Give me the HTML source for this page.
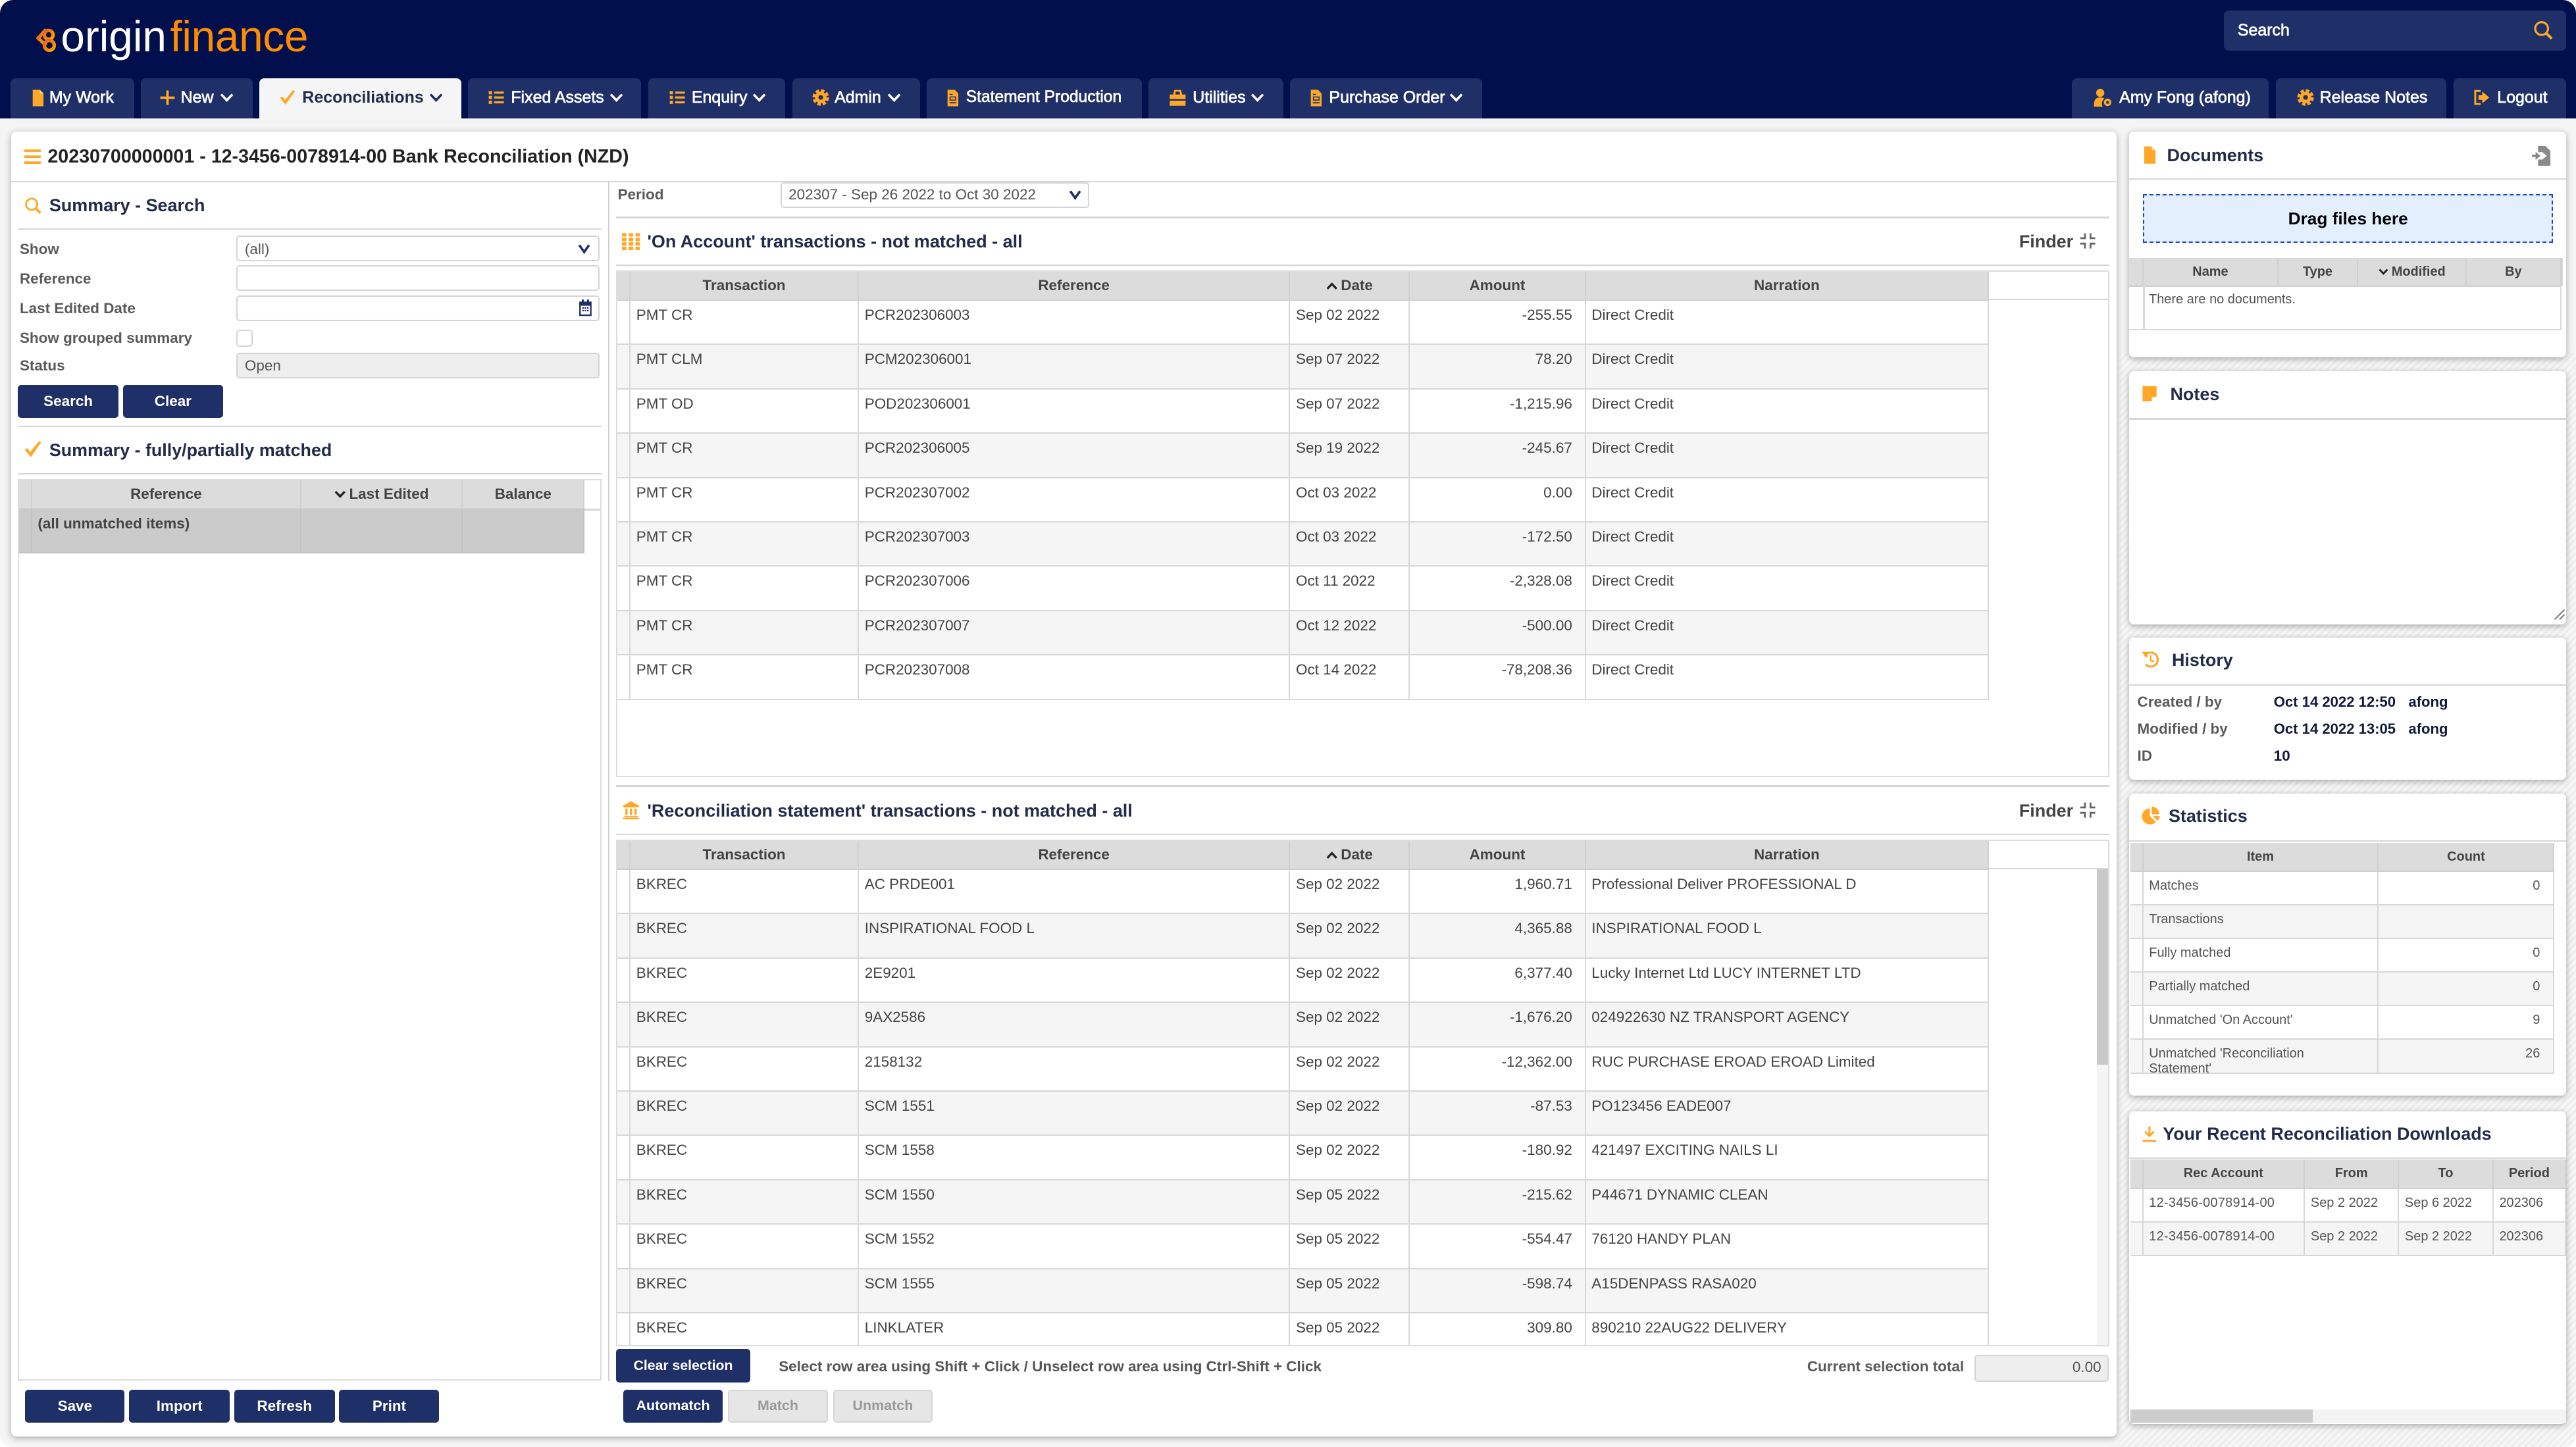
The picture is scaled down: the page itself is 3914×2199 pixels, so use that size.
<!DOCTYPE html>
<html lang="en"><head><meta charset="utf-8"><title>Bank Reconciliation</title>
<style>
html,body{margin:0;padding:0;background:#fff;width:3914px;height:2199px;overflow:hidden}
#root{zoom:2.4962;position:relative;width:1568px;height:881px;background:#f5f5f5;border-radius:8px;overflow:hidden;font-family:"Liberation Sans",Arial,sans-serif;font-size:9px;color:#444}
#root div,#root svg,#root table{position:absolute}
.x{white-space:nowrap;line-height:13px}
.hd{left:0;top:0;width:1568px;height:72px;background:#010f4d}
.tab{top:47.5px;height:24.5px;background:#1f2f68;border-radius:3px 3px 0 0}
.tt{top:53px;font-size:10px;color:#fff;white-space:nowrap;line-height:13px;-webkit-text-stroke:.28px #fff}
.p{background:#fff;border-radius:3px;box-shadow:0 1px 4px rgba(0,0,0,.32)}
.ln{height:1px;background:#d6d6d6}
.st{font-size:10.8px;font-weight:bold;color:#222c4a;white-space:nowrap;line-height:13px}
.lb{font-weight:bold;color:#5a5a5a;white-space:nowrap;line-height:13px}
.in{box-sizing:border-box;background:#fff;border:1px solid #d4d4d4;border-radius:2px}
.b{box-sizing:border-box;background:#1f2f68;color:#fff;font-weight:bold;text-align:center;border-radius:2px;height:20px;line-height:20px;white-space:nowrap}
.dis{background:#e6e6e6;color:#999;border:1px solid #d6d6d6;line-height:18px}
.box{box-sizing:border-box;border:1px solid #dcdcdc;background:#fff;overflow:hidden}
table{border-collapse:separate;border-spacing:0;table-layout:fixed}
th{box-sizing:border-box;background:#dcdcdc;border-right:1px solid #d0d0d0;border-bottom:1px solid #cfcfcf;font-weight:bold;color:#444;text-align:center;padding:0;white-space:nowrap;overflow:hidden}
td{box-sizing:border-box;border-right:1px solid #d8d8d8;border-bottom:1px solid #d8d8d8;vertical-align:top;padding:0 3.5px;white-space:nowrap;overflow:hidden;color:#444}
.m th{height:17.5px;line-height:17px;font-size:9px}
.m td{height:27px;line-height:18px;font-size:9px}
.m tr:nth-child(odd) td{background:#f5f5f5}
td.n{text-align:right;padding-right:7.5px}
td.z{padding:0}
.s{font-size:8px}
.s th{font-size:8px;height:17px;line-height:17px}
.s td{font-size:8px;height:20.45px;line-height:17px;color:#555}
.s tr:nth-child(odd) td{background:#f5f5f5}
.s td.c{padding-right:8px;text-align:right}
.hat{left:1290px;top:215px;width:278px;height:666px;background:repeating-linear-gradient(135deg,#ececec 0 1px,#f6f6f6 1px 3px)}
.v{display:inline-block;vertical-align:middle;margin-right:2px}
</style></head><body>
<svg width="0" height="0" style="position:absolute"><defs>
<symbol id="doc" viewBox="0 0 16 16"><path fill="#ffa726" d="M3 0h7l3.5 3.5V16H3z"/><path fill="#ffd9a0" d="M10 0l3.5 3.5H10z"/></symbol>
<symbol id="plus" viewBox="0 0 16 16"><path fill="#ffa726" d="M6.8 1h2.4v5.8H15v2.4H9.2V15H6.8V9.200H1V6.800h5.800z"/></symbol>
<symbol id="chk" viewBox="0 0 16 16"><path fill="#ffa726" d="M1 8.500l2-1.500 2.800 3.400L13.500 1 15.500 2 6.200 15z"/></symbol>
<symbol id="lst" viewBox="0 0 16 16"><path fill="#ffa726" d="M1 2h3v3H1zM6 2.500h9v2H6zM1 6.500h3v3H1zM6 7h9v2H6zM1 11h3v3H1zM6 11.500h9v2H6z"/></symbol>
<symbol id="gear" viewBox="0 0 16 16"><circle cx="8" cy="8" r="6.200" fill="none" stroke="#ffa726" stroke-width="3" stroke-dasharray="3.100 1.770"/><circle cx="8" cy="8" r="5.400" fill="#ffa726"/><circle cx="8" cy="8" r="2.200" fill="#1f2f68"/></symbol>
<symbol id="stm" viewBox="0 0 16 16"><path fill="#ffa726" d="M3 0h7l3.500 3.500V16H3z"/><path fill="#1f2f68" d="M5 4h3v1H5zM5 6.500h6.500v4H5zM5 12h6.500v1.200H5z"/><path fill="#ffa726" d="M6 7.500h4.500v2H6z"/></symbol>
<symbol id="tool" viewBox="0 0 16 16"><path fill="#ffa726" d="M5 1h6l1 4h3v4H1V5h3zM6.300 2.500L6 5h4l-.3-2.500zM1 10.500h14V15H1z"/></symbol>
<symbol id="usr" viewBox="0 0 16 16"><circle cx="6" cy="3.800" r="3.300" fill="#ffa726"/><path fill="#ffa726" d="M1 15c-.5-6 2-7.500 5-7.500 1.500 0 2.600.3 3.400 1A5 5 0 0 0 8 15z"/><circle cx="12" cy="11.500" r="3" fill="#ffa726"/><circle cx="12" cy="11.500" r="1.200" fill="#1f2f68"/></symbol>
<symbol id="out" viewBox="0 0 16 16"><path fill="none" stroke="#ffa726" stroke-width="1.800" d="M7 2H2v12h5"/><path fill="#ffa726" d="M8.500 2.500L15 8l-6.500 5.500V10.200H5V5.800h3.500z"/></symbol>
<symbol id="srch" viewBox="0 0 16 16"><circle cx="6.800" cy="6.800" r="5.200" fill="none" stroke="#ffa726" stroke-width="1.700"/><path stroke="#ffa726" stroke-width="2.200" d="M10.500 10.500L15 15"/></symbol>
<symbol id="ham" viewBox="0 0 16 16"><path fill="#ffa726" d="M0 1h16v2.400H0zM0 6.800h16v2.400H0zM0 12.600h16V15H0z"/></symbol>
<symbol id="grd" viewBox="0 0 16 16"><path fill="#ffa726" d="M0 1h4v3H0zM6 1h4v3H6zM12 1h4v3h-4zM0 5h4v3H0zM6 5h4v3H6zM12 5h4v3h-4zM0 9h4v3H0zM6 9h4v3H6zM12 9h4v3h-4zM0 13h4v3H0zM6 13h4v3H6zM12 13h4v3h-4z"/></symbol>
<symbol id="bnk" viewBox="0 0 16 16"><path fill="#ffa726" d="M8 0l7 4v1.500H1V4zM2 13h12v1H2zM1 14.500h14V16H1zM3 6.500h2V12H3zM7 6.500h2V12H7zM11 6.500h2V12h-2z"/></symbol>
<symbol id="fnd" viewBox="0 0 16 16"><path fill="none" stroke="#666" stroke-width="1.700" d="M5.400 1v4.500H1M10.600 15v-4.500H15M1 10.500h4.400V15M15 5.500h-4.400V1"/></symbol>
<symbol id="cal" viewBox="0 0 16 16"><path fill="#1f2f68" d="M2 2h2.500V0h2v2h3V0h2v2H14v14H2zM3.500 6v8.500h9V6z"/><path fill="#1f2f68" d="M5 7.500h1.500V9H5zM7.300 7.500h1.500V9H7.300zM9.600 7.500h1.500V9H9.600zM5 10h1.500v1.500H5zM7.300 10h1.500v1.500H7.300zM9.600 10h1.500v1.500H9.600z"/></symbol>
<symbol id="hst" viewBox="0 0 16 16"><path fill="none" stroke="#ffa726" stroke-width="1.800" d="M2.600 5.500A6.200 6.200 0 1 1 3.500 12.500"/><path fill="#ffa726" d="M0 1.500h5.500L5 7z"/><path fill="none" stroke="#ffa726" stroke-width="1.500" d="M8 4.500V9l3 1.200"/></symbol>
<symbol id="pie" viewBox="0 0 16 16"><path fill="#ffa726" d="M7 2.500V9l5 5A6.800 6.800 0 1 1 7 2.500z"/><path fill="#ffa726" d="M8.500 1A6.500 6.500 0 0 1 15 7.500H8.500zM9.500 9H15.500a7 7 0 0 1-2 4z"/></symbol>
<symbol id="dwn" viewBox="0 0 16 16"><path fill="#ffa726" d="M7 0h2v7.500l3-2.800 1.300 1.300L8 11.500 2.700 6 4 4.700l3 2.800zM1 14h14v2H1z"/></symbol>
<symbol id="nte" viewBox="0 0 16 16"><path fill="#ffa726" d="M1.500 1h13v9.500L9.500 15h-8z"/><path fill="#fff" d="M14.500 11v.6L10.200 15H10v-2.500c0-1 .5-1.500 1.500-1.500z"/></symbol>
<symbol id="imp" viewBox="0 0 16 16"><path fill="#8a8a8a" d="M5 0h6l4 4v12H5v-5h3.500L12 8 8.500 5H5z"/><path fill="#8a8a8a" d="M0 7h3V4.800L7 8l-4 3.200V9H0z"/></symbol>
<symbol id="w" viewBox="0 0 10 8"><path fill="none" stroke="#fff" stroke-width="1.700" d="M1 1.500l4 4.200 4-4.200"/></symbol>
<symbol id="k" viewBox="0 0 10 8"><path fill="none" stroke="#1f2f68" stroke-width="1.700" d="M1 1.500l4 4.200 4-4.200"/></symbol>
<symbol id="kd" viewBox="0 0 10 8"><path fill="none" stroke="#222" stroke-width="1.900" d="M1 1.500l4 4.200 4-4.200"/></symbol>
<symbol id="ku" viewBox="0 0 10 8"><path fill="none" stroke="#222" stroke-width="1.900" d="M1 6.500l4-4.200 4 4.200"/></symbol>
<symbol id="nvy" viewBox="0 0 10 8"><path fill="none" stroke="#1f2f68" stroke-width="1.700" d="M1.500 1.500l3.500 5 3.500-5"/></symbol>
<linearGradient id="lg" x1="0" y1="0" x2="1" y2="1"><stop offset="0" stop-color="#e8601a"/><stop offset="1" stop-color="#ffa400"/></linearGradient>
</defs></svg>
<div id="root">

<div class="hd"></div>
<svg style="left:22px;top:16.500px;width:12px;height:15.500px" viewBox="0 0 12 15.500"><g fill="none" stroke="url(#lg)" stroke-width="2.100"><path d="M6 1.500L1.200 6.800 6 11.200"/><circle cx="7.600" cy="4.800" r="2.700"/><circle cx="8" cy="11.200" r="3"/></g></svg>
<div class="x" style="left:37px;top:6px;font-size:26.300px;line-height:33px;color:#fff">origin</div>
<div class="x" style="left:103.500px;top:6px;font-size:26.300px;line-height:33px;color:#ff8c00;letter-spacing:-.1px">finance</div>

<div style="left:1353.500px;top:6.500px;width:208.500px;height:24.500px;background:#1f2f68;border-radius:3px"></div>
<div class="tt" style="left:1362px;top:12px">Search</div>
<svg style="left:1542px;top:12px;width:12px;height:12.500px"><use href="#srch"/></svg>

<div class="tab" style="left:6.600px;width:75px"></div>
<svg style="left:18px;top:53.500px;width:10px;height:12px"><use href="#doc"/></svg>
<div class="tt" style="left:30px">My Work</div>
<div class="tab" style="left:85.700px;width:68px"></div>
<svg style="left:97px;top:54.500px;width:10px;height:10px"><use href="#plus"/></svg>
<div class="tt" style="left:110px">New</div>
<svg style="left:134px;top:56px;width:8.500px;height:7px"><use href="#w"/></svg>
<div class="tab" style="left:158px;width:122.700px;background:#f5f5f5"></div>
<svg style="left:170px;top:54px;width:10px;height:10.500px"><use href="#chk"/></svg>
<div class="tt" style="left:184px;color:#222c4a;font-weight:bold;-webkit-text-stroke:0">Reconciliations</div>
<svg style="left:261px;top:56px;width:8.500px;height:7px"><use href="#k"/></svg>
<div class="tab" style="left:285px;width:105px"></div>
<svg style="left:297px;top:54px;width:10.500px;height:10.500px"><use href="#lst"/></svg>
<div class="tt" style="left:311px">Fixed Assets</div>
<svg style="left:371px;top:56px;width:8.500px;height:7px"><use href="#w"/></svg>
<div class="tab" style="left:394.700px;width:83.300px"></div>
<svg style="left:407px;top:54px;width:10.500px;height:10.500px"><use href="#lst"/></svg>
<div class="tt" style="left:421px">Enquiry</div>
<svg style="left:458px;top:56px;width:8.500px;height:7px"><use href="#w"/></svg>
<div class="tab" style="left:482.300px;width:77.700px"></div>
<svg style="left:494.500px;top:54px;width:10.500px;height:10.500px"><use href="#gear"/></svg>
<div class="tt" style="left:508px">Admin</div>
<svg style="left:540px;top:56px;width:8.500px;height:7px"><use href="#w"/></svg>
<div class="tab" style="left:564px;width:131px"></div>
<svg style="left:575px;top:53.500px;width:10px;height:12px"><use href="#stm"/></svg>
<div class="tt" style="left:588px;font-size:9.850px">Statement Production</div>
<div class="tab" style="left:699px;width:82px"></div>
<svg style="left:711px;top:54px;width:11.500px;height:11px"><use href="#tool"/></svg>
<div class="tt" style="left:726px">Utilities</div>
<svg style="left:761px;top:56px;width:8.500px;height:7px"><use href="#w"/></svg>
<div class="tab" style="left:785px;width:117px"></div>
<svg style="left:796px;top:53.500px;width:10px;height:12px"><use href="#stm"/></svg>
<div class="tt" style="left:809px">Purchase Order</div>
<svg style="left:882px;top:56px;width:8.500px;height:7px"><use href="#w"/></svg>

<div class="tab" style="left:1261px;width:120px"></div>
<svg style="left:1273px;top:53.500px;width:13.500px;height:12px"><use href="#usr"/></svg>
<div class="tt" style="left:1290px">Amy Fong (afong)</div>
<div class="tab" style="left:1385.500px;width:103.500px"></div>
<svg style="left:1398px;top:54px;width:10.500px;height:10.500px"><use href="#gear"/></svg>
<div class="tt" style="left:1412px">Release Notes</div>
<div class="tab" style="left:1493.500px;width:68.500px"></div>
<svg style="left:1505px;top:54px;width:11px;height:10.500px"><use href="#out"/></svg>
<div class="tt" style="left:1520px">Logout</div>

<div class="hat"></div>

<!-- MAIN PANEL -->
<div class="p" style="left:7px;top:80px;width:1281.500px;height:794.500px"></div>
<svg style="left:15px;top:90px;width:10px;height:10.500px"><use href="#ham"/></svg>
<div class="x" style="left:29px;top:89px;font-size:11.470px;font-weight:bold;color:#222">20230700000001 - 12-3456-0078914-00 Bank Reconciliation (NZD)</div>
<div class="ln" style="left:7px;top:110px;width:1281px"></div>
<div style="left:370px;top:110px;width:1px;height:731px;background:#d0d0d0"></div>

<svg style="left:15px;top:119.500px;width:10.500px;height:11.500px"><use href="#srch"/></svg>
<div class="st" style="left:30px;top:118.500px">Summary - Search</div>
<div class="ln" style="left:11px;top:139px;width:355px"></div>

<div class="lb" style="left:12px;top:145.500px">Show</div>
<div class="in" style="left:144px;top:143.500px;width:221px;height:15.500px"></div>
<div class="x" style="left:149px;top:145.500px;color:#555">(all)</div>
<svg style="left:351.500px;top:148px;width:8.500px;height:7px"><use href="#nvy"/></svg>
<div class="lb" style="left:12px;top:163.500px">Reference</div>
<div class="in" style="left:144px;top:161.500px;width:221px;height:15.500px"></div>
<div class="lb" style="left:12px;top:181.500px">Last Edited Date</div>
<div class="in" style="left:144px;top:179.800px;width:221px;height:15.500px"></div>
<svg style="left:351.500px;top:182px;width:10px;height:11px"><use href="#cal"/></svg>
<div class="lb" style="left:12px;top:199.500px">Show grouped summary</div>
<div class="in" style="left:144px;top:200.700px;width:10px;height:10.500px"></div>
<div class="lb" style="left:12px;top:216.500px">Status</div>
<div class="in" style="left:144px;top:214.700px;width:221px;height:15.700px;background:#eee"></div>
<div class="x" style="left:149px;top:216.500px;color:#555">Open</div>
<div class="b" style="left:11px;top:234.300px;width:61px">Search</div>
<div class="b" style="left:74.800px;top:234.300px;width:61px">Clear</div>
<div class="ln" style="left:11px;top:259px;width:355px"></div>
<svg style="left:14.500px;top:268px;width:11px;height:11px"><use href="#chk"/></svg>
<div class="st" style="left:30px;top:267.500px;font-size:10.750px">Summary - fully/partially matched</div>
<div class="ln" style="left:11px;top:288px;width:355px"></div>

<div class="box" style="left:10.700px;top:291.500px;width:355.300px;height:549px">
<table class="m" style="left:0;top:0;width:344.300px">
<col style="width:8px"><col style="width:164px"><col style="width:98.300px"><col style="width:74px">
<tr><th></th><th>Reference</th><th><svg class="v" style="position:static;width:7px;height:6px"><use href="#kd"/></svg>Last Edited</th><th>Balance</th></tr>
<tr><td class="z" style="background:#cbcbcb;border-color:#c2c2c2"></td><td style="background:#cbcbcb;border-color:#c2c2c2;padding-left:3.500px;font-weight:bold;color:#444">(all unmatched items)</td><td style="background:#cbcbcb;border-color:#c2c2c2"></td><td style="background:#cbcbcb;border-color:#c2c2c2"></td></tr>
</table>
<div class="ln" style="left:344.300px;top:17.500px;width:11px"></div>
</div>

<div class="b" style="left:15.300px;top:846px;width:60.600px">Save</div>
<div class="b" style="left:78.500px;top:846px;width:61.500px">Import</div>
<div class="b" style="left:142.500px;top:846px;width:61.300px">Refresh</div>
<div class="b" style="left:206.500px;top:846px;width:60.900px">Print</div>

<div class="lb" style="left:376px;top:112px">Period</div>
<div class="in" style="left:475px;top:111px;width:188px;height:15.500px"></div>
<div class="x" style="left:480px;top:112px;color:#555">202307 - Sep 26 2022 to Oct 30 2022</div>
<svg style="left:650px;top:115px;width:8.500px;height:7px"><use href="#nvy"/></svg>
<div class="ln" style="left:375px;top:132px;width:909px"></div>
<svg style="left:378.500px;top:141px;width:11px;height:11.500px"><use href="#grd"/></svg>
<div class="st" style="left:394px;top:140.500px">'On Account' transactions - not matched - all</div>
<div class="x" style="left:1229px;top:140.500px;font-size:10.800px;font-weight:bold;color:#444">Finder</div>
<svg style="left:1265.500px;top:141.500px;width:10.500px;height:10.500px"><use href="#fnd"/></svg>
<div class="ln" style="left:375px;top:161px;width:909px"></div>

<div class="box" style="left:375px;top:164.500px;width:909px;height:308.500px">
<table class="m" style="left:0;top:0;width:835px">
<col style="width:8px"><col style="width:139px"><col style="width:262.500px"><col style="width:73px"><col style="width:107px"><col style="width:245.500px">
<tr><th></th><th>Transaction</th><th>Reference</th><th><svg class="v" style="position:static;width:7px;height:6px"><use href="#ku"/></svg>Date</th><th>Amount</th><th>Narration</th></tr>
<tr><td class="z"></td><td>PMT CR</td><td>PCR202306003</td><td>Sep 02 2022</td><td class="n">-255.55</td><td>Direct Credit</td></tr>
<tr><td class="z"></td><td>PMT CLM</td><td>PCM202306001</td><td>Sep 07 2022</td><td class="n">78.20</td><td>Direct Credit</td></tr>
<tr><td class="z"></td><td>PMT OD</td><td>POD202306001</td><td>Sep 07 2022</td><td class="n">-1,215.96</td><td>Direct Credit</td></tr>
<tr><td class="z"></td><td>PMT CR</td><td>PCR202306005</td><td>Sep 19 2022</td><td class="n">-245.67</td><td>Direct Credit</td></tr>
<tr><td class="z"></td><td>PMT CR</td><td>PCR202307002</td><td>Oct 03 2022</td><td class="n">0.00</td><td>Direct Credit</td></tr>
<tr><td class="z"></td><td>PMT CR</td><td>PCR202307003</td><td>Oct 03 2022</td><td class="n">-172.50</td><td>Direct Credit</td></tr>
<tr><td class="z"></td><td>PMT CR</td><td>PCR202307006</td><td>Oct 11 2022</td><td class="n">-2,328.08</td><td>Direct Credit</td></tr>
<tr><td class="z"></td><td>PMT CR</td><td>PCR202307007</td><td>Oct 12 2022</td><td class="n">-500.00</td><td>Direct Credit</td></tr>
<tr><td class="z"></td><td>PMT CR</td><td>PCR202307008</td><td>Oct 14 2022</td><td class="n">-78,208.36</td><td>Direct Credit</td></tr>
</table>
<div class="ln" style="left:835px;top:16.500px;width:74px"></div>
</div>

<div class="ln" style="left:375px;top:478px;width:909px"></div>
<svg style="left:378.500px;top:487.500px;width:11px;height:11.500px"><use href="#bnk"/></svg>
<div class="st" style="left:394px;top:487px">'Reconciliation statement' transactions - not matched - all</div>
<div class="x" style="left:1229px;top:487px;font-size:10.800px;font-weight:bold;color:#444">Finder</div>
<svg style="left:1265.500px;top:488px;width:10.500px;height:10.500px"><use href="#fnd"/></svg>
<div class="ln" style="left:375px;top:507.500px;width:909px"></div>

<div class="box" style="left:375px;top:511px;width:909px;height:308.500px">
<table class="m" style="left:0;top:0;width:835px">
<col style="width:8px"><col style="width:139px"><col style="width:262.500px"><col style="width:73px"><col style="width:107px"><col style="width:245.500px">
<tr><th></th><th>Transaction</th><th>Reference</th><th><svg class="v" style="position:static;width:7px;height:6px"><use href="#ku"/></svg>Date</th><th>Amount</th><th>Narration</th></tr>
<tr><td class="z"></td><td>BKREC</td><td>AC PRDE001</td><td>Sep 02 2022</td><td class="n">1,960.71</td><td>Professional Deliver PROFESSIONAL D</td></tr>
<tr><td class="z"></td><td>BKREC</td><td>INSPIRATIONAL FOOD L</td><td>Sep 02 2022</td><td class="n">4,365.88</td><td>INSPIRATIONAL FOOD L</td></tr>
<tr><td class="z"></td><td>BKREC</td><td>2E9201</td><td>Sep 02 2022</td><td class="n">6,377.40</td><td>Lucky Internet Ltd LUCY INTERNET LTD</td></tr>
<tr><td class="z"></td><td>BKREC</td><td>9AX2586</td><td>Sep 02 2022</td><td class="n">-1,676.20</td><td>024922630 NZ TRANSPORT AGENCY</td></tr>
<tr><td class="z"></td><td>BKREC</td><td>2158132</td><td>Sep 02 2022</td><td class="n">-12,362.00</td><td>RUC PURCHASE EROAD EROAD Limited</td></tr>
<tr><td class="z"></td><td>BKREC</td><td>SCM 1551</td><td>Sep 02 2022</td><td class="n">-87.53</td><td>PO123456 EADE007</td></tr>
<tr><td class="z"></td><td>BKREC</td><td>SCM 1558</td><td>Sep 02 2022</td><td class="n">-180.92</td><td>421497 EXCITING NAILS LI</td></tr>
<tr><td class="z"></td><td>BKREC</td><td>SCM 1550</td><td>Sep 05 2022</td><td class="n">-215.62</td><td>P44671 DYNAMIC CLEAN</td></tr>
<tr><td class="z"></td><td>BKREC</td><td>SCM 1552</td><td>Sep 05 2022</td><td class="n">-554.47</td><td>76120 HANDY PLAN</td></tr>
<tr><td class="z"></td><td>BKREC</td><td>SCM 1555</td><td>Sep 05 2022</td><td class="n">-598.74</td><td>A15DENPASS RASA020</td></tr>
<tr><td class="z"></td><td>BKREC</td><td>LINKLATER</td><td>Sep 05 2022</td><td class="n">309.80</td><td>890210 22AUG22 DELIVERY</td></tr>
</table>
<div class="ln" style="left:835px;top:16.500px;width:74px"></div>
<div style="left:900.500px;top:17.500px;width:7.500px;height:290px;background:#f4f4f4"></div>
<div style="left:900.500px;top:17.500px;width:7.500px;height:119px;background:#c9c9c9"></div>
</div>

<div class="b" style="left:375px;top:821.200px;width:81.700px;height:20.500px;line-height:20.500px;font-size:8.500px">Clear selection</div>
<div class="x" style="left:474px;top:825.500px;font-weight:bold;color:#555">Select row area using Shift + Click / Unselect row area using Ctrl-Shift + Click</div>
<div class="lb" style="left:1100px;top:825.500px">Current selection total</div>
<div class="in" style="left:1202px;top:824.800px;width:81.500px;height:16.500px;background:#eee"></div>
<div class="x" style="left:1202px;top:826px;width:77px;text-align:right;color:#555">0.00</div>
<div class="b" style="left:379.300px;top:846px;width:60.700px;font-size:8.600px">Automatch</div>
<div class="b dis" style="left:443px;top:846px;width:61px;font-size:8.600px">Match</div>
<div class="b dis" style="left:507px;top:846px;width:60.800px;font-size:8.600px">Unmatch</div>

<!-- DOCUMENTS -->
<div class="p" style="left:1296px;top:80px;width:266px;height:137.500px"></div>
<svg style="left:1303px;top:88px;width:10.500px;height:12.500px"><use href="#doc"/></svg>
<div class="st" style="left:1319px;top:88px">Documents</div>
<svg style="left:1541px;top:88px;width:12px;height:13.500px"><use href="#imp"/></svg>
<div class="ln" style="left:1296px;top:108.500px;width:266px"></div>
<div style="box-sizing:border-box;left:1304.500px;top:118px;width:249.500px;height:30px;background:#e3effd;border:1px dashed #1c46d6"></div>
<div class="x" style="left:1304.500px;top:126.500px;width:249.500px;text-align:center;font-size:10.500px;font-weight:bold;color:#000">Drag files here</div>
<table class="s" style="left:1296px;top:157px;width:263px">
<col style="width:8.900px"><col style="width:81.900px"><col style="width:48.700px"><col style="width:66.100px"><col style="width:57.400px">
<tr><th></th><th>Name</th><th>Type</th><th><svg class="v" style="position:static;width:6px;height:5px"><use href="#kd"/></svg>Modified</th><th>By</th></tr>
</table>
<div style="left:1559px;top:157px;width:1px;height:17px;background:#d6d6d6"></div>
<div style="box-sizing:border-box;left:1296px;top:174px;width:263px;height:27px;border-bottom:1px solid #d8d8d8;border-right:1px solid #d8d8d8"></div>
<div style="left:1304.500px;top:174px;width:1px;height:27px;background:#d8d8d8"></div>
<div class="x" style="left:1308px;top:176px;font-size:8px;color:#555">There are no documents.</div>

<!-- NOTES -->
<div class="p" style="left:1296px;top:225.800px;width:266px;height:154.200px"></div>
<svg style="left:1303px;top:234px;width:10.500px;height:11.500px"><use href="#nte"/></svg>
<div class="st" style="left:1321px;top:233.500px">Notes</div>
<div class="ln" style="left:1296px;top:254.500px;width:266px"></div>
<svg style="left:1554px;top:370px;width:8px;height:8px"><path d="M1 7L7 1M4 7L7 4" stroke="#777" stroke-width=".8" fill="none"/></svg>

<!-- HISTORY -->
<div class="p" style="left:1296px;top:388.200px;width:266px;height:86.500px"></div>
<svg style="left:1303.500px;top:396px;width:11px;height:11px"><use href="#hst"/></svg>
<div class="st" style="left:1322px;top:395.500px">History</div>
<div class="ln" style="left:1296px;top:416.500px;width:266px"></div>
<div class="lb" style="left:1301px;top:421px">Created / by</div>
<div class="x" style="left:1384px;top:421px;font-weight:bold;color:#111a3a;font-size:8.850px">Oct 14 2022 12:50</div>
<div class="x" style="left:1466px;top:421px;font-weight:bold;color:#111a3a;font-size:8.850px">afong</div>
<div class="lb" style="left:1301px;top:437.500px">Modified / by</div>
<div class="x" style="left:1384px;top:437.500px;font-weight:bold;color:#111a3a;font-size:8.850px">Oct 14 2022 13:05</div>
<div class="x" style="left:1466px;top:437.500px;font-weight:bold;color:#111a3a;font-size:8.850px">afong</div>
<div class="lb" style="left:1301px;top:454px">ID</div>
<div class="x" style="left:1384px;top:454px;font-weight:bold;color:#111a3a">10</div>

<!-- STATISTICS -->
<div class="p" style="left:1296px;top:483px;width:266px;height:184px"></div>
<svg style="left:1303.500px;top:490.500px;width:11.500px;height:11.500px"><use href="#pie"/></svg>
<div class="st" style="left:1320px;top:490.500px">Statistics</div>
<div class="ln" style="left:1296px;top:511.500px;width:266px"></div>
<table class="s" style="left:1296.600px;top:513px;width:258.300px">
<col style="width:8px"><col style="width:143.400px"><col style="width:106.900px">
<tr><th></th><th>Item</th><th>Count</th></tr>
<tr><td class="z"></td><td>Matches</td><td class="c">0</td></tr>
<tr><td class="z"></td><td>Transactions</td><td class="c"></td></tr>
<tr><td class="z"></td><td>Fully matched</td><td class="c">0</td></tr>
<tr><td class="z"></td><td>Partially matched</td><td class="c">0</td></tr>
<tr><td class="z"></td><td>Unmatched 'On Account'</td><td class="c">9</td></tr>
<tr><td class="z"></td><td style="line-height:9px;padding-top:4px"><span style="display:block;height:16px;overflow:hidden">Unmatched 'Reconciliation<br>Statement'</span></td><td class="c">26</td></tr>
</table>

<!-- DOWNLOADS -->
<div class="p" style="left:1296px;top:676.500px;width:266px;height:190.500px"></div>
<svg style="left:1303.500px;top:684.500px;width:9.500px;height:11.500px"><use href="#dwn"/></svg>
<div class="st" style="left:1316.500px;top:684px">Your Recent Reconciliation Downloads</div>
<div class="ln" style="left:1296px;top:704.500px;width:266px"></div>
<table class="s" style="left:1296.600px;top:706px;width:265.400px">
<col style="width:8px"><col style="width:98.400px"><col style="width:57.300px"><col style="width:57.500px"><col style="width:44.200px">
<tr><th></th><th>Rec Account</th><th>From</th><th>To</th><th>Period</th></tr>
<tr><td class="z"></td><td style="letter-spacing:.1px">12-3456-0078914-00</td><td>Sep 2 2022</td><td>Sep 6 2022</td><td>202306</td></tr>
<tr><td class="z"></td><td style="letter-spacing:.1px">12-3456-0078914-00</td><td>Sep 2 2022</td><td>Sep 2 2022</td><td>202306</td></tr>
</table>
<div style="left:1296.600px;top:858px;width:265.400px;height:8px;background:#f3f3f3"></div>
<div style="left:1296.600px;top:858px;width:111px;height:8px;background:#cdcdcd"></div>

</div>
</body></html>
